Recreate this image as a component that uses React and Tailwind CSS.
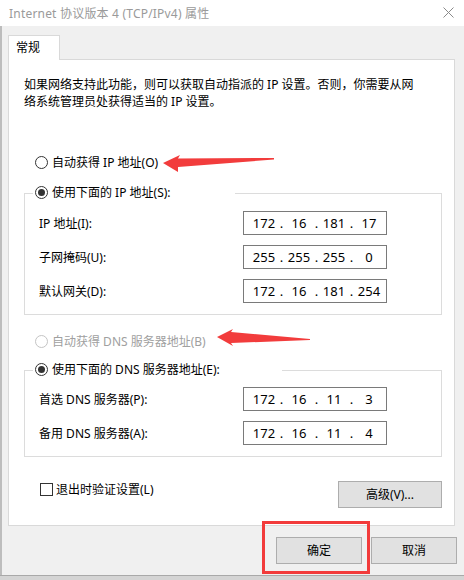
import React from 'react';

const Radio = ({ checked, disabled, label }) => (
    <div className={`flex items-center h-[17px] ${disabled ? 'text-[#a0a0a0]' : 'text-black'}`}>
        <span
            className={`flex items-center justify-center w-[13px] h-[13px] rounded-full border bg-white ${disabled ? 'border-[#c4c4c4]' : 'border-[#333333]'}`}
        >
            {checked && <span className="block w-[7px] h-[7px] rounded-full bg-[#333333]" />}
        </span>
        <span className="ml-[4px] whitespace-nowrap">{label}</span>
    </div>
);

const IpField = ({ value }) => {
    const parts = value.split('.');
    return (
        <div className="flex items-center w-[144px] h-[24px] border border-[#7a7a7a] bg-white pl-[6px] text-[13px]">
            {parts.map((p, i) => (
                <React.Fragment key={i}>
                    <span className="w-[28px] text-center">{p}</span>
                    {i < 3 && <span className="w-[7px] text-center">.</span>}
                </React.Fragment>
            ))}
        </div>
    );
};

const Row = ({ label, value }) => (
    <div className="flex items-center pl-[14px]">
        <span className="w-[204px] whitespace-nowrap">{label}</span>
        <IpField value={value} />
    </div>
);

const Button = ({ children, className = '' }) => (
    <div className={`flex items-center justify-center h-[27px] w-[86px] bg-[#e1e1e1] border border-[#adadad] ${className}`}>
        {children}
    </div>
);

const App = () => {
    return (
        <div className="relative w-[464px] h-[580px] overflow-hidden bg-[#f0f0f0] flex flex-col text-[12px] leading-[17px] text-black font-['Noto_Sans','Noto_Sans_CJK_SC',sans-serif] shadow-[inset_2px_0_0_#bdbdbd]">
            {/* title bar */}
            <div className="flex items-center justify-between h-[26px] bg-white pl-[9px] pr-[10px] text-[#9a9a9a]">
                <span className="whitespace-nowrap tracking-[0.2px]">Internet 协议版本 4 (TCP/IPv4) 属性</span>
                <svg width="11" height="11" viewBox="0 0 11 11" className="mt-[-2px]">
                    <path d="M0.5 0.5 L10.5 10.5 M10.5 0.5 L0.5 10.5" stroke="#8a8a8a" strokeWidth="1" fill="none" />
                </svg>
            </div>

            {/* tab */}
            <div className="relative z-10 ml-[8px] mt-[9px] -mb-px w-[52px] h-[25px] border border-b-0 border-[#d9d9d9] bg-white pl-[7px] leading-[23px]">
                常规
            </div>

            {/* panel */}
            <div className="ml-[8px] w-[447px] border border-[#d9d9d9] bg-white flex flex-col">
                <p className="ml-[15px] mt-[16px] whitespace-nowrap">
                    如果网络支持此功能，则可以获取自动指派的 IP 设置。否则，你需要从网
                    <br />
                    络系统管理员处获得适当的 IP 设置。
                </p>

                <div className="ml-[26px] mt-[44px]">
                    <Radio label="自动获得 IP 地址(O)" />
                </div>

                <div className="ml-[15px] mt-[22px] w-[418px] border border-[#dcdcdc] flex flex-col pb-[11px]">
                    <div className="-mt-[10px] ml-[8px] w-[202px] pl-[2px] bg-white">
                        <Radio checked label="使用下面的 IP 地址(S):" />
                    </div>
                    <div className="mt-[10px] flex flex-col gap-[10px]">
                        <Row label="IP 地址(I):" value="172.16.181.17" />
                        <Row label="子网掩码(U):" value="255.255.255.0" />
                        <Row label="默认网关(D):" value="172.16.181.254" />
                    </div>
                </div>

                <div className="ml-[26px] mt-[18px]">
                    <Radio disabled label="自动获得 DNS 服务器地址(B)" />
                </div>

                <div className="ml-[15px] mt-[20px] w-[418px] border border-[#dcdcdc] flex flex-col pb-[11px]">
                    <div className="-mt-[10px] ml-[8px] w-[249px] pl-[2px] bg-white">
                        <Radio checked label="使用下面的 DNS 服务器地址(E):" />
                    </div>
                    <div className="mt-[9px] flex flex-col gap-[10px]">
                        <Row label="首选 DNS 服务器(P):" value="172.16.11.3" />
                        <Row label="备用 DNS 服务器(A):" value="172.16.11.4" />
                    </div>
                </div>

                <div className="mt-[24px] pl-[31px] pr-[12px] pb-[17px] flex items-start justify-between">
                    <div className="flex items-center h-[17px]">
                        <span className="block w-[13px] h-[13px] border border-[#333333] bg-white" />
                        <span className="ml-[3px] whitespace-nowrap">退出时验证设置(L)</span>
                    </div>
                    <Button className="w-[104px] h-[26px]">高级(V)...</Button>
                </div>
            </div>

            {/* dialog buttons */}
            <div className="mt-[11px] pr-[7px] flex justify-end gap-[9px]">
                <Button>确定</Button>
                <Button>取消</Button>
            </div>

            <div className="mt-auto h-[5px] border-t border-[#a9a9a9] bg-[#d4d4d4]" />

            {/* annotations */}
            <div className="absolute left-[262px] top-[521px] w-[108px] h-[53px] border-[3px] border-[#f23b3b]" />
            <svg className="absolute left-0 top-0 pointer-events-none" width="464" height="580">
                <polygon
                    points="163,163 180,155 178,158.5 274,158 274,159.5 178,167 178,172"
                    fill="#f23c3c"
                />
                <polygon
                    points="217,337 233,329 231,332 310,339 310,340 231,343 233,346"
                    fill="#f23c3c"
                />
            </svg>
        </div>
    );
};

export default App;
